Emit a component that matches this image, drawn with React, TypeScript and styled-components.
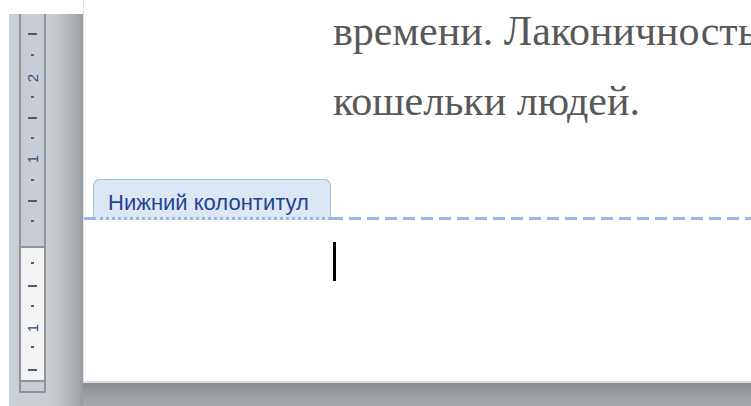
import React from 'react';
import styled, { createGlobalStyle } from 'styled-components';

const GlobalStyle = createGlobalStyle`
  html, body {
    margin: 0;
    padding: 0;
    background: #ffffff;
    overflow: hidden;
  }
`;

const Screen = styled.div`
  display: flex;
  width: 751px;
  height: 406px;
  padding-left: 9px;
  box-sizing: border-box;
  overflow: hidden;
`;

const SidePanel = styled.div`
  width: 74px;
  flex-shrink: 0;
  margin-top: 14px;
  padding-left: 10px;
  box-sizing: border-box;
  background: linear-gradient(
    to right,
    #cacfd4 0,
    #cacfd4 52%,
    #c2c6cb 66%,
    #adb1b6 86%,
    #999da2 100%
  );
`;

const Ruler = styled.div`
  position: relative;
  width: 27px;
  height: 379px;
  box-sizing: border-box;
  display: flex;
  flex-direction: column;
  border-left: 2px solid #8f949b;
  border-right: 2px solid #8f949b;
  border-bottom: 2px solid #8f949b;
`;

const MarginZone = styled.div`
  height: 232px;
  background: #c8cdd5;
  border-bottom: 2px solid #8f949b;
`;

const TextZone = styled.div`
  flex: 1;
  background: #f4f4f4;
  border-bottom: 2px solid #8f949b;
`;

const EndCap = styled.div`
  height: 9px;
  background: #c8cdd5;
`;

const Scale = styled.svg`
  position: absolute;
  left: 0;
  top: 0;
`;

const PageColumn = styled.div`
  flex: 1;
  display: flex;
  flex-direction: column;
  min-width: 0;
`;

const Page = styled.div`
  height: 383px;
  flex-shrink: 0;
  box-sizing: border-box;
  background: #ffffff;
  border-left: 1px solid #dcdfe6;
  border-bottom: 2px solid #d8dbe0;
  overflow: hidden;
`;

const PageShadow = styled.div`
  flex: 1;
  background: linear-gradient(to bottom, #878b90 0, #979ba0 35%, #a6aaaf 100%);
`;

const BodyText = styled.div`
  display: flow-root;
  height: 140px;
  padding-left: 249px;
  font-family: 'Liberation Serif', 'Times New Roman', serif;
  font-size: 42px;
  line-height: 70px;
  color: #585858;
  white-space: nowrap;
`;

const TextLine = styled.div`
  height: 70px;

  &:first-child {
    margin-top: -4px;
  }
`;

const FooterBar = styled.div`
  display: flex;
  align-items: flex-end;
  margin-top: 39px;
`;

const SolidStub = styled.div`
  width: 9px;
  height: 3px;
  background: #9ab8e2;
`;

const FooterTab = styled.div`
  width: 238px;
  height: 41px;
  padding: 7px 0 0 14px;
  box-sizing: border-box;
  background: #dbe7f5;
  border: 1px solid #a3bcdb;
  border-bottom: 3px dotted #9ab8e2;
  border-radius: 7px 7px 0 0;
  font-family: 'Liberation Sans', Arial, sans-serif;
  font-size: 22px;
  line-height: 32px;
  color: #24438f;
  white-space: nowrap;
`;

const DashedLine = styled.div`
  flex: 1;
  height: 3px;
  background: repeating-linear-gradient(
    to right,
    #9ab8e2 0,
    #9ab8e2 12px,
    transparent 12px,
    transparent 18px
  );
`;

const FooterBody = styled.div`
  padding: 22px 0 0 249px;
`;

const Caret = styled.div`
  width: 3px;
  height: 39px;
  background: #000000;
`;

const longTicks = [20, 104, 187, 272, 356];
const dotTicks = [41, 83, 124, 166, 207, 249, 292, 333];
const numbers = [
  { y: 64, label: '2' },
  { y: 145, label: '1' },
  { y: 314, label: '1' },
];

const RulerScale: React.FC = () => (
  <Scale width="23" height="377" viewBox="0 0 23 377">
    {longTicks.map((y) => (
      <rect key={`l${y}`} x="7" y={y - 1} width="9" height="2" fill="#555a62" />
    ))}
    {dotTicks.map((y) => (
      <rect key={`d${y}`} x="10" y={y - 1} width="3" height="2" fill="#5b6068" />
    ))}
    {numbers.map((n) => (
      <text
        key={`n${n.y}`}
        x="0"
        y="0"
        transform={`translate(17 ${n.y}) rotate(-90)`}
        textAnchor="middle"
        fontFamily="Liberation Sans, Arial, sans-serif"
        fontSize="15"
        fill="#3b4d7c"
      >
        {n.label}
      </text>
    ))}
  </Scale>
);

const App: React.FC = () => (
  <>
    <GlobalStyle />
    <Screen>
      <SidePanel>
        <Ruler>
          <MarginZone />
          <TextZone />
          <EndCap />
          <RulerScale />
        </Ruler>
      </SidePanel>
      <PageColumn>
        <Page>
          <BodyText>
            <TextLine>времени. Лаконичность</TextLine>
            <TextLine>кошельки людей.</TextLine>
          </BodyText>
          <FooterBar>
            <SolidStub />
            <FooterTab>Нижний колонтитул</FooterTab>
            <DashedLine />
          </FooterBar>
          <FooterBody>
            <Caret />
          </FooterBody>
        </Page>
        <PageShadow />
      </PageColumn>
    </Screen>
  </>
);

export default App;
